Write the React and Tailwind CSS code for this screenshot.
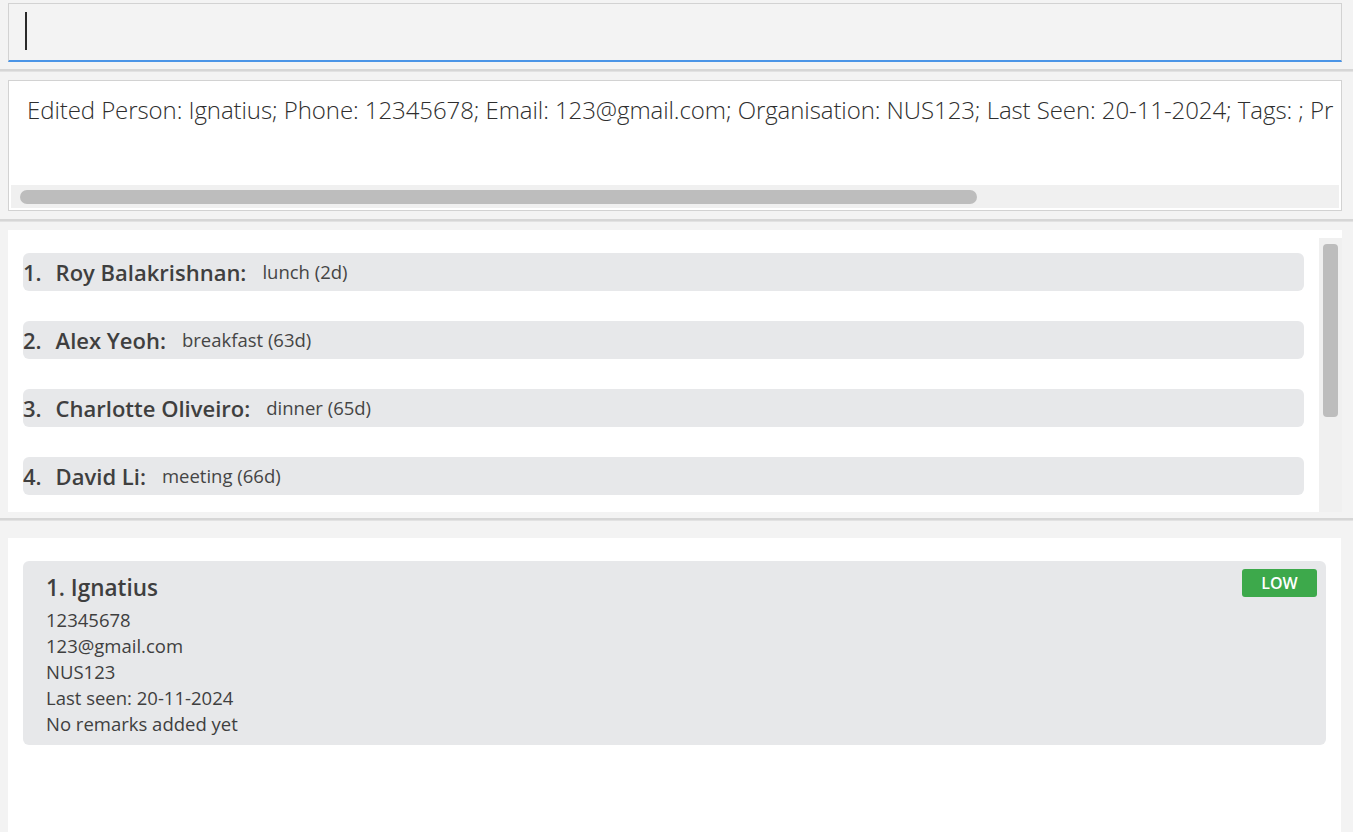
import React from "react";

const items = [
  { n: "1.", name: "Roy Balakrishnan:", note: "lunch (2d)" },
  { n: "2.", name: "Alex Yeoh:", note: "breakfast (63d)" },
  { n: "3.", name: "Charlotte Oliveiro:", note: "dinner (65d)" },
  { n: "4.", name: "David Li:", note: "meeting (66d)" },
];

export default function App() {
  return (
    <div
      className="w-[1353px] h-[832px] overflow-hidden bg-[#f3f3f3] flex flex-col"
      style={{ fontFamily: "'Open Sans', Lato, sans-serif" }}
    >
      {/* command box */}
      <div className="pt-[3px] pl-[8px] pr-[11px]">
        <div className="h-[59px] border border-[#d2d2d2] border-b-2 border-b-[#4a94e6] bg-[#f3f3f3] flex items-center pl-[16px]">
          <div className="w-[2px] h-[38px] bg-[#2a2a2a] -mt-[2px]" />
        </div>
      </div>

      <div className="mt-[7px] h-[3px] bg-[#d6d6d6] border-b border-[#e2e2e2]" />

      {/* result display */}
      <div className="mt-[8px] pl-[8px] pr-[11px]">
        <div className="h-[131px] border border-[#d2d2d2] bg-white p-[2px] flex flex-col">
          <div className="flex-1 overflow-hidden pl-[16px] pt-[12px]">
            <div className="whitespace-nowrap text-[24px] font-light text-[#2e2e2e] leading-[30px] tracking-[-0.08px]">
              Edited Person: Ignatius; Phone: 12345678; Email: 123@gmail.com; Organisation: NUS123; Last Seen: 20-11-2024; Tags: ; Pr
            </div>
          </div>
          <div className="h-[23px] bg-[#f0f0f0] flex items-center pl-[9px]">
            <div className="w-[957px] h-[14px] rounded-full bg-[#bdbdbd]" />
          </div>
        </div>
      </div>

      <div className="mt-[8px] h-[3px] bg-[#d6d6d6] border-b border-[#e2e2e2]" />

      {/* list panel */}
      <div className="mt-[8px] pl-[8px] pr-[11px]">
        <div className="h-[282px] bg-white flex">
          <div className="flex-1 pl-[15px] pr-[15px] pt-[23px] flex flex-col gap-[30px]">
            {items.map((it) => (
              <div
                key={it.n}
                className="h-[38px] rounded-[6px] bg-[#e7e8ea] flex items-center text-[#3f3f3f]"
              >
                <span className="text-[22px] font-semibold">{it.n}</span>
                <span className="text-[22px] font-semibold ml-[14px]">{it.name}</span>
                <span className="text-[18.5px] ml-[16px] text-[#454545]">{it.note}</span>
              </div>
            ))}
          </div>
          <div className="w-[23px] mt-[8px] bg-[#f0f0f0] pt-[6px] flex justify-center">
            <div className="w-[15px] h-[173px] rounded-[4px] bg-[#bdbdbd]" />
          </div>
        </div>
      </div>

      <div className="mt-[6px] h-[3px] bg-[#d6d6d6] border-b border-[#e2e2e2]" />

      {/* detail panel */}
      <div className="mt-[17px] pl-[8px] pr-[12px] flex-1 flex">
        <div className="flex-1 bg-white pt-[23px] pl-[15px] pr-[15px]">
          <div className="h-[184px] rounded-[6px] bg-[#e7e8ea] relative pl-[23px] pt-[12px] text-[#3f3f3f]">
            <div className="text-[22.5px] font-semibold leading-[30px]">1. Ignatius</div>
            <div className="text-[18.5px] leading-[26px] mt-[4px]">
              <div>12345678</div>
              <div>123@gmail.com</div>
              <div>NUS123</div>
              <div>Last seen: 20-11-2024</div>
              <div>No remarks added yet</div>
            </div>
            <div className="absolute top-[8px] right-[9px] w-[75px] h-[28px] rounded-[3px] bg-[#3da94b] text-white text-[16px] font-semibold flex items-center justify-center">
              LOW
            </div>
          </div>
        </div>
      </div>
    </div>
  );
}
